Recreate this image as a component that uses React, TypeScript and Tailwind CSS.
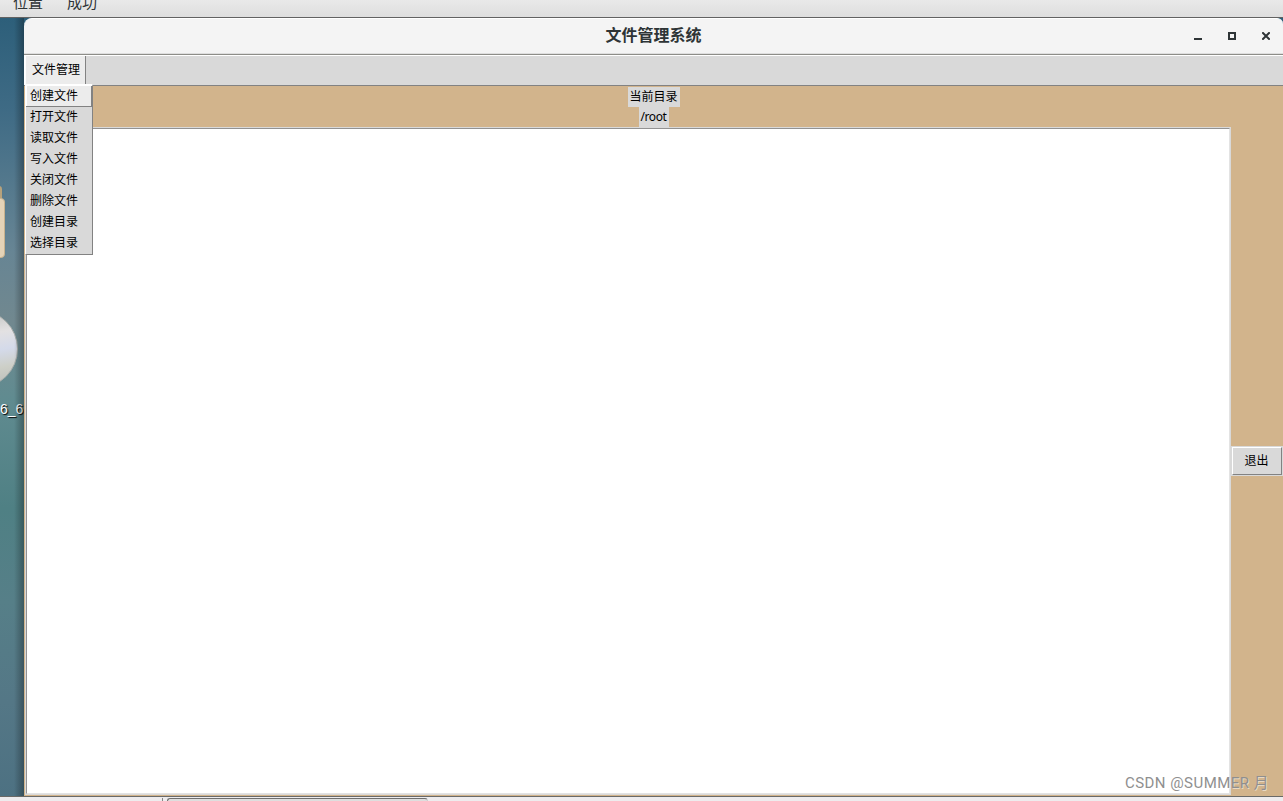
const menuItems = [
  "创建文件",
  "打开文件",
  "读取文件",
  "写入文件",
  "关闭文件",
  "删除文件",
  "创建目录",
  "选择目录",
];

const TopPanel = () => {
  return (
    <header className="h-[18px] shrink-0 overflow-hidden border-b border-[#626262] bg-linear-to-b from-[#e9e9e9] to-[#dedede]">
      <div className="-mt-[7px] flex gap-6 pl-[13px] text-[15px] leading-5 text-[#2e3436]">
        <span>位置</span>
        <span>成功</span>
      </div>
    </header>
  );
};

const Desktop = () => {
  return (
    <aside className="relative w-6 shrink-0 overflow-hidden bg-[linear-gradient(180deg,#2d5f7a_0%,#3f6b85_12%,#678594_30%,#71888f_39%,#608b90_49%,#4f8084_63%,#567f88_75%,#547786_88%,#4d7182_100%)]">
      {/* folder */}
      <div className="absolute -left-1 top-[168px] h-4 w-1.5 rounded-sm bg-[#b7a27c]"></div>
      <div className="absolute -left-1 top-[180px] h-[60px] w-[9px] rounded-sm border border-[#c8b28e] bg-[#e5d3b7]"></div>
      {/* disc */}
      <div className="absolute -left-[60px] top-[292px] h-[78px] w-[78px] rounded-full border border-[#a9adaa] bg-[linear-gradient(170deg,#c9cac8_15%,#e3e1e2_35%,#d4daea_55%,#cdcfc7_75%,#b8bab8_100%)]"></div>
      <span className="absolute left-0 top-[381px] text-[14px] leading-5 text-white [text-shadow:1px_1px_1px_#000]">
        6_6
      </span>
      <div className="absolute inset-y-0 right-0 w-2.5 bg-linear-to-r from-transparent to-black/30"></div>
    </aside>
  );
};

const TitleBar = () => {
  return (
    <div className="flex h-[37px] shrink-0 items-center rounded-tl-lg rounded-tr-md border-b border-[#8d8d88] border-t border-t-white bg-[#f4f4f4] pb-0.5 shadow-[inset_0_-1px_0_#dedede]">
      <div className="w-[109px]"></div>
      <h1 className="flex-1 text-center text-[16px] leading-5 font-bold text-[#2e3436]">
        文件管理系统
      </h1>
      <div className="flex w-[109px] items-center gap-[26px] pl-5">
        <svg width="8" height="8" viewBox="0 0 8 8" fill="#2e3436" shapeRendering="crispEdges">
          <path d="M0 6h8v2H0z" />
        </svg>
        <svg width="8" height="8" viewBox="0 0 8 8" fill="none" stroke="#2e3436" strokeWidth="2" shapeRendering="crispEdges">
          <path d="M1 1h6v6H1z" />
        </svg>
        <svg width="8" height="8" viewBox="0 0 8 8" fill="none" stroke="#2e3436" strokeWidth="2">
          <path d="M.3.3l7.4 7.4M7.7.3L.3 7.7" />
        </svg>
      </div>
    </div>
  );
};

const MenuBar = () => {
  return (
    <nav className="relative h-[31px] shrink-0 border-b border-t border-b-[#828282] border-t-white bg-[#d9d9d9] pl-0.5 shadow-[inset_2px_0_0_#fff]">
      <button className="block h-[29px] w-[60px] border-b border-r border-[#828282] bg-[#ececec] pl-[6px] text-left text-[12px] leading-[29px]">
        文件管理
      </button>
      <ul className="absolute left-px top-7 z-10 h-[171px] w-[68px] border-b border-l border-r border-t-2 border-b-[#828282] border-l-white border-r-[#828282] border-t-white bg-[#d9d9d9]">
        {menuItems.map((item, index) => (
          <li
            key={item}
            className={
              index === 0
                ? "h-[21px] border-b border-r border-[#828282] bg-[#ececec] pl-1 text-[12px] leading-[21px] shadow-[inset_1px_0_0_#fff]"
                : "h-[21px] pl-1 text-[12px] leading-[21px]"
            }
          >
            {item}
          </li>
        ))}
      </ul>
    </nav>
  );
};

const Content = () => {
  return (
    <main className="flex min-h-0 flex-1 flex-col bg-[#d2b48c]">
      <div className="flex h-[41px] shrink-0 flex-col items-center pt-px text-[12px]">
        <span className="h-5 w-[52px] bg-[#d9d9d9] text-center leading-[21px]">当前目录</span>
        <span className="h-5 w-[30px] bg-[#d9d9d9] text-center font-['Noto_Sans'] leading-5 tracking-[-0.4px]">
          /root
        </span>
      </div>
      <div className="flex min-h-0 flex-1">
        <div className="ml-px flex-1 border border-[#d9d9d9]">
          <div className="h-full border border-b-[#e3e3e3] border-l-[#929292] border-r-[#e3e3e3] border-t-[#929292] bg-white"></div>
        </div>
        <div className="flex w-[52px] shrink-0 items-center">
          <button className="mx-auto h-[30px] w-[52px] border border-[#d9d9d9] bg-[#d9d9d9] text-[12px] leading-[27px]">
            <span className="block h-7 border border-b-[#828282] border-l-white border-r-[#828282] border-t-white pr-px">
              退出
            </span>
          </button>
        </div>
      </div>
      <div className="h-px shrink-0"></div>
    </main>
  );
};

const Taskbar = () => {
  return (
    <footer className="flex h-[5px] shrink-0 border-t border-[#6a6a68] bg-[#eeecee]">
      <div className="mt-px w-[163px] border-r border-[#858585]"></div>
      <div className="ml-1 mt-px w-[261px] rounded-t-sm border-l border-r border-t border-[#6f6f6f] border-r-[#cccccc] bg-[#dedede]"></div>
    </footer>
  );
};

const App = () => {
  return (
    <div className="relative flex h-[801px] w-[1283px] flex-col overflow-hidden bg-[#2d5f7a] font-['Liberation_Sans','Noto_Sans_CJK_SC',sans-serif] text-black">
      <TopPanel />
      <div className="flex min-h-0 flex-1">
        <Desktop />
        <div className="flex min-w-0 flex-1 flex-col">
          <TitleBar />
          <MenuBar />
          <Content />
        </div>
      </div>
      <Taskbar />
      <div className="absolute left-[1125px] top-[773px] z-20 whitespace-nowrap font-['Roboto','Noto_Sans_CJK_SC',sans-serif] text-[15px] leading-5 tracking-[0.45px] text-[#8f8f8f] [text-shadow:1px_1px_0_rgba(255,255,255,0.5)]">
        CSDN @SUMMER 月
      </div>
    </div>
  );
};

export default App;
